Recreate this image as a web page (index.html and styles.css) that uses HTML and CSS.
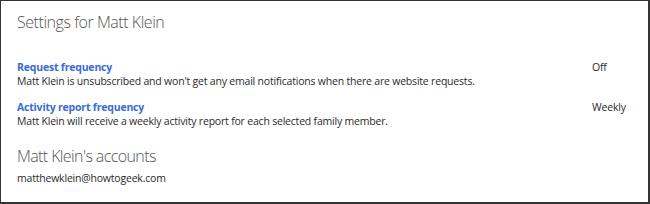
FILE: index.html
```html
<!DOCTYPE html>
<html lang="en">
<head>
  <meta charset="UTF-8">
  <title>Family settings</title>
  <link rel="stylesheet" href="styles.css">
</head>
<body>
  <div class="frame">
    <h1>Settings for Matt Klein</h1>

    <div class="setting">
      <div class="setting-text">
        <a class="setting-name" href="#">Request frequency</a>
        <div class="setting-desc">Matt Klein is unsubscribed and won't get any email notifications when there are website requests.</div>
      </div>
      <div class="setting-value">Off</div>
    </div>

    <div class="setting">
      <div class="setting-text">
        <a class="setting-name" href="#">Activity report frequency</a>
        <div class="setting-desc">Matt Klein will receive a weekly activity report for each selected family member.</div>
      </div>
      <div class="setting-value">Weekly</div>
    </div>

    <h2>Matt Klein's accounts</h2>
    <div class="account">matthewklein@howtogeek.com</div>
  </div>
</body>
</html>
```

FILE: styles.css
```css
body {
  margin: 0;
  font-family: "Open Sans", "Noto Sans", sans-serif;
  background: #fff;
}

.frame {
  box-sizing: border-box;
  width: 650px;
  height: 204px;
  padding: 9px 16px 0 16px;
  border: 1px solid #333;
  border-right-width: 2px;
  border-bottom-width: 2px;
  color: #2b2b2b;
}

h1 {
  margin: 0 0 27px 0;
  font-size: 16px;
  font-weight: 300;
  letter-spacing: -0.45px;
  color: #555;
  line-height: 24px;
}

.setting {
  display: flex;
  justify-content: space-between;
  margin-bottom: 13px;
}

.setting-name {
  display: block;
  font-size: 10.5px;
  font-weight: bold;
  letter-spacing: -0.2px;
  color: #3a6bd6;
  text-decoration: none;
  line-height: 13px;
}

.setting-desc,
.setting-value,
.account {
  font-size: 10.5px;
  letter-spacing: -0.2px;
  line-height: 14px;
}

.setting-value {
  width: 40px;
  line-height: 13px;
}

h2 {
  margin: 17px 0 4px 0;
  font-size: 16px;
  font-weight: 300;
  letter-spacing: -0.6px;
  color: #555;
  line-height: 22px;
}
```
